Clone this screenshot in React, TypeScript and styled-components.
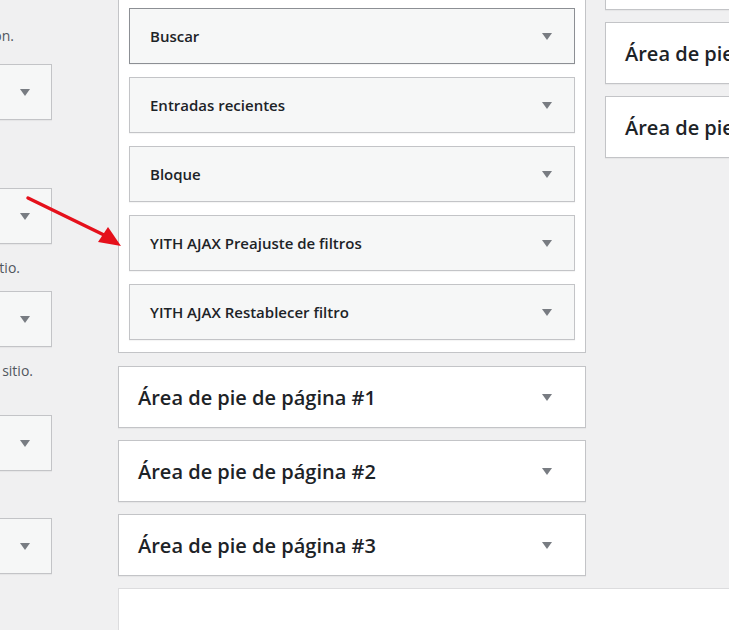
import styled, { createGlobalStyle } from 'styled-components'

const GlobalStyle = createGlobalStyle`
    body {
        margin: 0;
        background: #f0f0f1;
        font-family: "Open Sans", "Noto Sans", sans-serif;
        color: #1d2327;
        overflow: hidden;
    }
`

const Page = styled.div`
    position: relative;
    display: flex;
    align-items: flex-start;
    width: 729px;
    height: 630px;
    overflow: hidden;
`

const LeftCol = styled.div`
    flex: 0 0 260px;
    min-width: 0;
    overflow: hidden;
    margin-left: -208px;
    margin-top: 12px;
    display: flex;
    flex-direction: column;
`

const Desc = styled.div<{ $lines: number; $after?: number }>`
    height: ${p => p.$lines * 21}px;
    padding: 13px 0 ${p => p.$after ?? 13}px;
    font-size: 14px;
    line-height: 21px;
    color: #50575e;
    text-align: right;
`

const DescLine = styled.div<{ $end: number }>`
    padding-right: ${p => p.$end}px;
    white-space: nowrap;
    direction: rtl;
    unicode-bidi: plaintext;
`

const Toggle = styled.span<{ $right: number }>`
    position: absolute;
    right: ${p => p.$right}px;
    top: 50%;
    margin-top: -3px;
    display: flex;
`

const WidgetBox = styled.div<{ $focus?: boolean }>`
    position: relative;
    box-sizing: border-box;
    height: 56px;
    display: flex;
    align-items: center;
    padding: 0 20px;
    background: #f6f7f7;
    border: 1px solid ${p => (p.$focus ? '#8c8f94' : '#c3c4c7')};
    box-shadow: 0 1px 1px rgba(0, 0, 0, 0.04);
    font-size: 15px;
    font-weight: 600;
`

const Main = styled.div`
    flex: 0 0 720px;
    min-width: 0;
    margin-left: 66px;
    margin-top: -3px;
    display: flex;
    flex-direction: column;
`

const Columns = styled.div`
    display: flex;
    align-items: flex-start;
    gap: 19px;
`

const SidebarCol = styled.div<{ $width: number; $shift?: number }>`
    flex: 0 0 ${p => p.$width}px;
    min-width: 0;
    margin-top: ${p => p.$shift ?? 0}px;
    display: flex;
    flex-direction: column;
    gap: 12px;
`

const OpenSidebar = styled.div`
    background: #fff;
    border: 1px solid #c3c4c7;
    padding: 10px 10px 12px;
    margin-bottom: 1px;
    display: flex;
    flex-direction: column;
    gap: 13px;
`

const SidebarHeader = styled.div`
    position: relative;
    box-sizing: border-box;
    height: 62px;
    display: flex;
    align-items: center;
    padding: 0 19px;
    background: #fff;
    border: 1px solid #c3c4c7;
    box-shadow: 0 1px 1px rgba(0, 0, 0, 0.04);
    font-size: 20px;
    font-weight: 600;
    white-space: nowrap;
    overflow: hidden;
`

const BottomPanel = styled.div`
    margin-top: 12px;
    height: 60px;
    background: #fff;
    border-top: 1px solid #dcdcde;
    border-left: 1px solid #dcdcde;
`

const Annotation = styled.svg`
    position: absolute;
    left: 0;
    top: 0;
    pointer-events: none;
`

const Caret = () => (
    <svg width="10" height="7" viewBox="0 0 10 7">
        <polygon points="0,0 10,0 5,7" fill="#787c82" />
    </svg>
)

const leftItems = [
    { lines: [] as { text: string; end: number }[], count: 2 },
    { lines: [{ text: 'Muestra enlaces en tu sitio.', end: 32 }], count: 1 },
    { lines: [{ text: 'Muestra las entradas de tu sitio.', end: 19 }], count: 2 },
    { lines: [], count: 1 },
    { lines: [], count: 1 },
]

const widgets = [
    'Buscar',
    'Entradas recientes',
    'Bloque',
    'YITH AJAX Preajuste de filtros',
    'YITH AJAX Restablecer filtro',
]

const footers = ['Área de pie de página #1', 'Área de pie de página #2', 'Área de pie de página #3']

export default function App() {
    return (
        <>
            <GlobalStyle />
            <Page>
                <LeftCol>
                    <Desc $lines={1} $after={18}>
                        <DescLine $end={38}>Añade un widget con esta opción.</DescLine>
                    </Desc>
                    {leftItems.map((item, i) => (
                        <div key={i}>
                            <WidgetBox>
                                <Toggle $right={21}><Caret /></Toggle>
                            </WidgetBox>
                            <Desc $lines={item.count}>
                                {item.lines.map(l => (
                                    <DescLine key={l.text} $end={l.end}>{l.text}</DescLine>
                                ))}
                            </Desc>
                        </div>
                    ))}
                </LeftCol>
                <Main>
                    <Columns>
                        <SidebarCol $width={468}>
                            <OpenSidebar>
                                {widgets.map((w, i) => (
                                    <WidgetBox key={w} $focus={i === 0}>
                                        {w}
                                        <Toggle $right={22}><Caret /></Toggle>
                                    </WidgetBox>
                                ))}
                            </OpenSidebar>
                            {footers.map(f => (
                                <SidebarHeader key={f}>
                                    {f}
                                    <Toggle $right={33}><Caret /></Toggle>
                                </SidebarHeader>
                            ))}
                        </SidebarCol>
                        <SidebarCol $width={300} $shift={-49}>
                            <SidebarHeader>Barra lateral de la tienda</SidebarHeader>
                            <SidebarHeader>Área de pie de página #4</SidebarHeader>
                            <SidebarHeader>Área de pie de página #5</SidebarHeader>
                        </SidebarCol>
                    </Columns>
                    <BottomPanel />
                </Main>
                <Annotation width="729" height="630" viewBox="0 0 729 630">
                    <line x1="28" y1="198" x2="104" y2="235" stroke="#e5101b" strokeWidth="3.5" strokeLinecap="round" />
                    <polygon points="121,246 98,242 108,227" fill="#e5101b" />
                </Annotation>
            </Page>
        </>
    )
}
